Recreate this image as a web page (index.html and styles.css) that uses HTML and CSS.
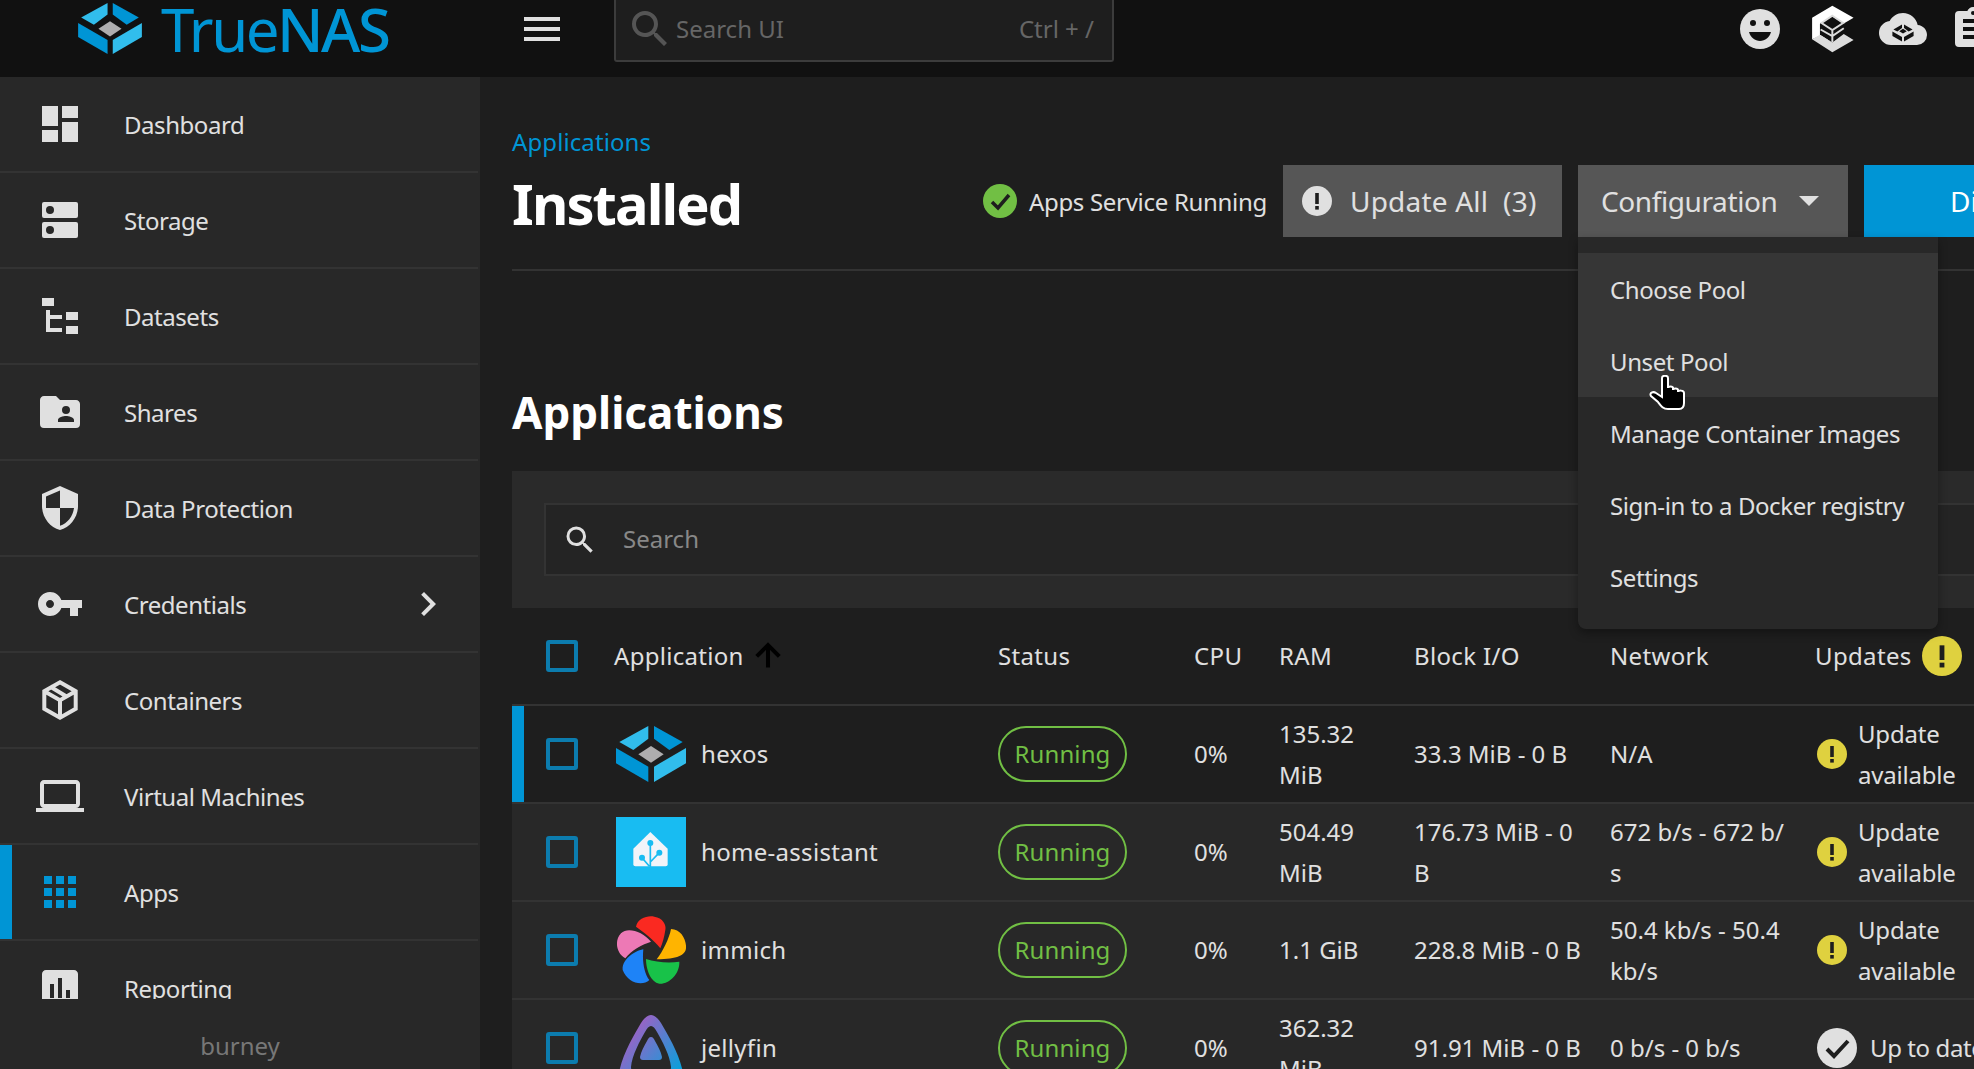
FILE: index.html
```html
<!DOCTYPE html>
<html lang="en">
<head>
<meta charset="utf-8">
<title>TrueNAS - Installed</title>
<link rel="stylesheet" href="styles.css">
</head>
<body>
<svg class="defs" aria-hidden="true">
  <defs>
    <symbol id="hex" viewBox="30 30 210 168">
      <polygon fill="#31bdec" points="40,78 127,30 127,68 82,102"/>
      <polygon fill="#0095d5" points="144,30 230,78 190,102 144,68"/>
      <polygon fill="#0095d5" points="30,96 127,152 127,198 30,142"/>
      <polygon fill="#31bdec" points="144,152 240,96 240,142 144,198"/>
      <polygon fill="#aeadae" points="135,90 173,115 135,140 97,115"/>
    </symbol>
    <symbol id="warn" viewBox="0 0 30 30">
      <circle cx="15" cy="15" r="15" fill="currentColor"/>
      <rect x="13.2" y="7" width="3.6" height="11" fill="#1e1e1e"/>
      <rect x="13.2" y="20" width="3.6" height="3.6" fill="#1e1e1e"/>
    </symbol>
    <linearGradient id="jelly" x1="0.1" y1="0.2" x2="0.95" y2="0.9">
      <stop offset="0" stop-color="#aa5cc3"/>
      <stop offset="1" stop-color="#00a4dc"/>
    </linearGradient>
  </defs>
</svg>

<header class="topbar">
  <div class="brand">
    <svg class="brand-mark"><use href="#hex"/></svg>
    <span class="brand-name">True<b>NAS</b></span>
  </div>
  <svg class="icon48 burger" viewBox="0 0 24 24"><path d="M3 18h18v-2H3v2zm0-5h18v-2H3v2zm0-5h18V6H3v2z"/></svg>
  <div class="ui-search">
    <svg class="icon48 ui-search-icon" viewBox="0 0 24 24"><path d="M9.5,3A6.5,6.5 0 0,1 16,9.5C16,11.11 15.41,12.59 14.44,13.73L14.71,14H15.5L20.5,19L19,20.5L14,15.5V14.71L13.73,14.44C12.59,15.41 11.11,16 9.5,16A6.5,6.5 0 0,1 3,9.5A6.5,6.5 0 0,1 9.5,3M9.5,5C7,5 5,7 5,9.5C5,12 7,14 9.5,14C12,14 14,12 14,9.5C14,7 12,5 9.5,5Z"/></svg>
    <span class="ui-search-text">Search UI</span>
    <span class="ui-search-key">Ctrl + /</span>
  </div>
  <div class="top-actions">
    <svg class="icon48 smile" viewBox="0 0 48 48">
      <circle cx="24" cy="24" r="20" fill="#e0e0e0"/>
      <circle cx="17" cy="18" r="3" fill="#111"/>
      <circle cx="31" cy="18" r="3" fill="#111"/>
      <path d="M13 27h22c-1.5 5.500-6 9-11 9s-9.500-3.500-11-9z" fill="#111"/>
    </svg>
    <svg class="icon48" viewBox="34 13 136 147">
      <polygon fill="#fff" points="100,15 165,52 135,70 100,48 62,70 62,104 100,128 62,108 38,118 38,52"/>
      <polygon fill="#dcdcdc" points="38,118 62,104 100,128 135,102 165,120 100,158"/>
      <path fill="none" stroke="#dcdcdc" stroke-width="6" d="M100 46L133 68L100 90L67 68ZM100 90V128M64 88L100 108L135 84"/>
    </svg>
    <svg class="icon48" viewBox="0 0 24 24">
      <path d="M19.35,10.04C18.67,6.59 15.64,4 12,4C9.11,4 6.6,5.64 5.35,8.04C2.34,8.36 0,10.91 0,14A6,6 0 0,0 6,20H19A5,5 0 0,0 24,15C24,12.36 21.95,10.22 19.35,10.04Z"/>
      <path fill="#111" d="M7.2 12.200L11.500 9.700V11.500L9.200 13.200ZM12.500 9.700L16.800 12.200L14.800 13.200L12.500 11.500ZM6.700 13.200L11.500 16V18.300L6.700 15.500ZM12.500 16L17.300 13.200V15.500L12.500 18.300ZM12 11.900L13.900 13.100L12 14.300L10.100 13.100Z"/>
    </svg>
    <svg class="icon48" viewBox="0 0 24 24"><path d="M17,9H7V7H17M17,13H7V11H17M14,17H7V15H14M12,3A1,1 0 0,1 13,4A1,1 0 0,1 12,5A1,1 0 0,1 11,4A1,1 0 0,1 12,3M19,3H14.82C14.4,1.84 13.3,1 12,1C10.7,1 9.6,1.84 9.18,3H5A2,2 0 0,0 3,5V19A2,2 0 0,0 5,21H19A2,2 0 0,0 21,19V5C21,3.89 20.1,3 19,3Z"/></svg>
  </div>
</header>

<div class="shell">
  <aside class="sidebar">
    <nav class="nav">
      <a class="nav-row"><svg class="icon48" viewBox="0 0 24 24"><path d="M13,3V9H21V3M13,21H21V11H13M3,21H11V15H3M3,13H11V3H3V13Z"/></svg><span>Dashboard</span></a>
      <a class="nav-row"><svg class="icon48" viewBox="0 0 48 48"><rect x="6" y="6" width="36" height="16" rx="2"/><rect x="6" y="26" width="36" height="16" rx="2"/><circle class="hole" cx="14" cy="14" r="4"/><circle class="hole" cx="14" cy="34" r="4"/></svg><span>Storage</span></a>
      <a class="nav-row"><svg class="icon48" viewBox="0 0 48 48"><path d="M6 6H18V14H6ZM10 18H14V23H26V27H14V36H26V40H10ZM30 20H42V28H30ZM30 34H42V42H30Z"/></svg><span>Datasets</span></a>
      <a class="nav-row"><svg class="icon48" viewBox="0 0 24 24"><path d="M19,17H11V16C11,14.67 13.67,14 15,14C16.33,14 19,14.67 19,16M15,9A2,2 0 0,1 17,11A2,2 0 0,1 15,13A2,2 0 0,1 13,11A2,2 0 0,1 15,9M20,6H12L10,4H4C2.89,4 2,4.89 2,6V18A2,2 0 0,0 4,20H20A2,2 0 0,0 22,18V8C22,6.89 21.1,6 20,6Z"/></svg><span>Shares</span></a>
      <a class="nav-row"><svg class="icon48" viewBox="0 0 24 24"><path d="M12 1L3 5v6c0 5.550 3.840 10.740 9 12 5.160-1.260 9-6.450 9-12V5l-9-4zm0 10.990h7c-.53 4.120-3.280 7.790-7 8.940V12H5V6.300l7-3.110v8.800z"/></svg><span>Data Protection</span></a>
      <a class="nav-row"><svg class="icon48" viewBox="0 0 24 24"><path d="M12.650 10C11.830 7.670 9.610 6 7 6c-3.310 0-6 2.690-6 6s2.690 6 6 6c2.610 0 4.830-1.670 5.650-4H17v4h4v-4h2v-4H12.650zM7 14c-1.100 0-2-.9-2-2s.9-2 2-2 2 .9 2 2-.9 2-2 2z"/></svg><span>Credentials</span><svg class="icon48 chevron" viewBox="0 0 24 24"><path d="M8.59,16.58L13.17,12L8.59,7.41L10,6L16,12L10,18L8.59,16.58Z"/></svg></a>
      <a class="nav-row"><svg class="icon48 box" viewBox="0 0 48 48"><path d="M24 6.300L39.700 15.200V32.800L24 41.700L8.300 32.800V15.200ZM8.300 15.200L24 24.300L39.700 15.200M24 24.300V41.700M14 10.500L30.500 20.500"/></svg><span>Containers</span></a>
      <a class="nav-row"><svg class="icon48" viewBox="0 0 24 24"><path d="M20 18c1.100 0 1.990-.9 1.990-2L22 6c0-1.100-.9-2-2-2H4c-1.100 0-2 .9-2 2v10c0 1.100.9 2 2 2H0v2h24v-2h-4zM4 6h16v10H4V6z"/></svg><span>Virtual Machines</span></a>
      <a class="nav-row is-active"><svg class="icon48" viewBox="0 0 24 24"><path d="M4 4h4v4H4zM10 4h4v4h-4zM16 4h4v4h-4zM4 10h4v4H4zM10 10h4v4h-4zM16 10h4v4h-4zM4 16h4v4H4zM10 16h4v4h-4zM16 16h4v4h-4z"/></svg><span>Apps</span></a>
      <a class="nav-row"><svg class="icon48" viewBox="0 0 24 24"><path d="M19 3H5c-1.100 0-2 .9-2 2v14c0 1.100.9 2 2 2h14c1.100 0 2-.9 2-2V5c0-1.100-.9-2-2-2zM9 17H7v-7h2v7zm4 0h-2V7h2v10zm4 0h-2v-4h2v4z"/></svg><span>Reporting</span></a>
    </nav>
    <div class="host">burney</div>
  </aside>

  <main class="main">
    <section class="page-head">
      <a class="crumb">Applications</a>
      <div class="title-row">
        <h1 class="title">Installed</h1>
        <div class="status-note">
          <svg class="status-check" viewBox="0 0 34 34"><circle cx="17" cy="17" r="17" fill="#71bf44"/><path d="M9 18l6 6 11-13" fill="none" stroke="#1e1e1e" stroke-width="3.500"/></svg>
          <span>Apps Service Running</span>
        </div>
        <button class="btn btn-update"><svg class="btn-warn"><use href="#warn"/></svg><span>Update All&nbsp; (3)</span></button>
        <div class="menu-anchor">
          <button class="btn btn-config"><span>Configuration</span><i class="caret"></i></button>
          <ul class="menu">
            <li class="menu-item is-hover">Choose Pool</li>
            <li class="menu-item is-hover">Unset Pool
              <svg class="hand" viewBox="0 0 37 36"><path d="M13 3C13 0 19 0 19 3L19 13C19 11 24 11 24 13L24 15C24 13 29 13 29 15L29 17C29 15 35 15 35 18L35 28C35 32 33 34 30 34L19 34C14 34 12 31 9 27L2 21C0 18 4 16 7 18L13 22Z"/></svg>
            </li>
            <li class="menu-item">Manage Container Images</li>
            <li class="menu-item">Sign-in to a Docker registry</li>
            <li class="menu-item">Settings</li>
          </ul>
        </div>
        <button class="btn btn-primary">Discover Apps</button>
      </div>
    </section>

    <h2 class="section-title">Applications</h2>

    <section class="apps-card">
      <div class="filter-bar">
        <div class="filter">
          <svg class="filter-icon" viewBox="0 0 24 24"><path d="M9.5,3A6.5,6.5 0 0,1 16,9.5C16,11.11 15.41,12.59 14.44,13.73L14.71,14H15.5L20.5,19L19,20.5L14,15.5V14.71L13.73,14.44C12.59,15.41 11.11,16 9.5,16A6.5,6.5 0 0,1 3,9.5A6.5,6.5 0 0,1 9.5,3M9.5,5C7,5 5,7 5,9.5C5,12 7,14 9.5,14C12,14 14,12 14,9.5C14,7 12,5 9.5,5Z"/></svg>
          <span class="filter-text">Search</span>
        </div>
      </div>

      <div class="grid-row grid-head">
        <div class="cell-check"><i class="check"></i></div>
        <div class="cell-name one">Application<svg class="sort" viewBox="0 0 24 24"><path d="M4 12l1.410 1.410L11 7.830V20h2V7.830l5.580 5.590L20 12l-8-8-8 8z"/></svg></div>
        <div class="one">Status</div>
        <div class="one">CPU</div>
        <div class="one">RAM</div>
        <div class="one">Block I/O</div>
        <div class="one">Network</div>
        <div class="cell-updates"><span class="one">Updates</span><svg class="warn-large"><use href="#warn"/></svg></div>
      </div>

      <div class="grid-row is-selected">
        <div class="cell-check"><i class="check"></i></div>
        <div class="cell-name one"><svg class="app-logo hexos"><use href="#hex"/></svg>hexos</div>
        <div><span class="pill">Running</span></div>
        <div class="one">0%</div>
        <div>135.32<br>MiB</div>
        <div class="one">33.3 MiB - 0 B</div>
        <div class="one">N/A</div>
        <div class="cell-update"><svg class="warn-small"><use href="#warn"/></svg><span>Update<br>available</span></div>
      </div>

      <div class="grid-row">
        <div class="cell-check"><i class="check"></i></div>
        <div class="cell-name one">
          <svg class="app-logo" viewBox="30 30 210 210"><rect x="30" y="30" width="210" height="210" fill="#18bcf2"/><path fill="#f2f4f9" d="M133 75L185 125V172Q185 178 179 178H88Q82 178 82 172V125Z"/><path fill="none" stroke="#18bcf2" stroke-width="5" d="M133 108V180M160 137L133 165M108 152L130 178"/><circle cx="133" cy="108" r="9" fill="#18bcf2"/><circle cx="160" cy="137" r="9" fill="#18bcf2"/><circle cx="108" cy="152" r="9" fill="#18bcf2"/></svg>
          home-assistant
        </div>
        <div><span class="pill">Running</span></div>
        <div class="one">0%</div>
        <div>504.49<br>MiB</div>
        <div>176.73 MiB - 0<br>B</div>
        <div>672 b/s - 672 b/<br>s</div>
        <div class="cell-update"><svg class="warn-small"><use href="#warn"/></svg><span>Update<br>available</span></div>
      </div>

      <div class="grid-row">
        <div class="cell-check"><i class="check"></i></div>
        <div class="cell-name one">
          <svg class="app-logo" viewBox="30 30 210 210">
            <path fill="#fa2921" d="M90 65C95 40 125 30 145 35C170 38 182 60 178 75C175 95 170 115 163 130C145 105 110 80 90 65Z"/>
            <path fill="#ffb400" d="M195 72C225 72 242 105 240 130C238 150 215 163 152 163C170 140 190 100 195 72Z"/>
            <path fill="#18c249" d="M120 162C150 172 190 175 220 170C222 205 190 238 160 236C135 232 120 195 120 162Z"/>
            <path fill="#1e83f7" d="M112 133C108 170 115 205 130 225C110 245 65 235 50 195C48 165 80 140 112 133Z"/>
            <path fill="#ed79b5" d="M135 110C110 118 75 135 58 160C30 145 25 105 45 85C65 65 110 80 135 110Z"/>
          </svg>
          immich
        </div>
        <div><span class="pill">Running</span></div>
        <div class="one">0%</div>
        <div class="one">1.1 GiB</div>
        <div class="one">228.8 MiB - 0 B</div>
        <div>50.4 kb/s - 50.4<br>kb/s</div>
        <div class="cell-update"><svg class="warn-small"><use href="#warn"/></svg><span>Update<br>available</span></div>
      </div>

      <div class="grid-row">
        <div class="cell-check"><i class="check"></i></div>
        <div class="cell-name one">
          <svg class="app-logo" viewBox="0 0 70 70"><path fill="url(#jelly)" fill-rule="evenodd" d="M35 2C32 2 28 5 25 10C18 22 6 42 3 60C2 66 5 70 12 70L58 70C65 70 68 66 67 60C64 42 52 22 45 10C42 5 38 2 35 2ZM35 13C33 13 31 15 29 19C24 28 16 42 15 54C15 58 17 60 20 60L50 60C53 60 55 58 55 54C54 42 46 28 41 19C39 15 37 13 35 13ZM35 24C33 24 32 26 31 28C28 33 25 39 24 44C24 46 25 47 27 47L43 47C45 47 46 46 46 44C45 39 42 33 39 28C38 26 37 24 35 24Z"/></svg>
          jellyfin
        </div>
        <div><span class="pill">Running</span></div>
        <div class="one">0%</div>
        <div>362.32<br>MiB</div>
        <div class="one">91.91 MiB - 0 B</div>
        <div class="one">0 b/s - 0 b/s</div>
        <div class="cell-update"><svg class="ok-icon" viewBox="0 0 40 40"><circle cx="20" cy="20" r="20" fill="#e0e0e0"/><path d="M10 21l7 7 14-15" fill="none" stroke="#1e1e1e" stroke-width="4"/></svg><span class="one date">Up to date</span></div>
      </div>
    </section>
  </main>
</div>
</body>
</html>
```

FILE: styles.css
```css
* { box-sizing: border-box; }

html, body {
  margin: 0;
  height: 1069px;
  overflow: hidden;
}

body {
  background: #1e1e1e;
  color: #e0e0e0;
  font-family: "Noto Sans", "Liberation Sans", sans-serif;
  font-size: 24px;
}

.defs { position: absolute; width: 0; height: 0; }

.icon48 { width: 48px; height: 48px; flex: none; fill: #e0e0e0; }

/* top bar */
.topbar {
  display: flex;
  align-items: flex-start;
  height: 77px;
  background: #111;
}

.brand {
  display: flex;
  align-items: flex-start;
  width: 518px;
  flex: none;
  padding-left: 77px;
}

.brand-mark { width: 66px; height: 51px; flex: none; margin-top: 3px; }

.brand-name {
  margin-left: 18px;
  color: #0095d5;
  font-size: 60px;
  line-height: 58px;
  font-weight: 400;
  letter-spacing: -2.5px;
}

.brand-name b { font-weight: 500; }

.burger { margin-top: 5px; }

.ui-search {
  display: flex;
  flex: none;
  align-items: center;
  width: 500px;
  height: 62px;
  margin-left: 48px;
  padding: 0 18px 3px 10px;
  border: 2px solid #3c3c3c;
  border-top: 0;
  border-radius: 0 0 3px 3px;
  background: #1e1e1e;
  color: #666;
}

.ui-search-icon { fill: #555; }

.ui-search-text { margin-left: 2px; }

.ui-search-key { margin-left: auto; }

.top-actions {
  display: flex;
  flex: none;
  gap: 22px;
  margin-left: 622px;
  padding-top: 5px;
}

.smile { margin-right: 3px; }

/* shell */
.shell {
  display: flex;
  height: 992px;
}

.sidebar {
  display: flex;
  flex-direction: column;
  width: 480px;
  flex: none;
  background: #282828;
}

.nav {
  height: 922px;
  overflow: hidden;
  flex: none;
}

.nav-row {
  display: flex;
  align-items: center;
  height: 96px;
  flex: none;
  padding: 0 26px 0 36px;
  margin-right: 2px;
  border-bottom: 2px solid #333;
  color: #e0e0e0;
  letter-spacing: -0.45px;
}

.nav-row span { margin-left: 40px; }

.nav-row .box { fill: none; stroke: #e0e0e0; stroke-width: 4; }

.hole { fill: #282828; }

.chevron { margin-left: auto; }

.is-active { box-shadow: inset 12px 0 0 #0095d5; }

.is-active .icon48 { fill: #0095d5; }

.host {
  text-align: center;
  color: #777;
  padding-top: 29px;
  line-height: 36px;
}

/* main */
.main {
  flex: 1;
  min-width: 0;
  padding-left: 32px;
  overflow: hidden;
}

.page-head {
  height: 194px;
  padding-top: 49px;
  border-bottom: 2px solid #333;
}

.crumb {
  display: block;
  height: 32px;
  line-height: 32px;
  color: #0095d5;
  letter-spacing: 0.1px;
}

.title-row {
  display: flex;
  align-items: center;
  width: 1552px;
  height: 72px;
  margin-top: 7px;
}

.title {
  flex: 1;
  margin: 0;
  padding-top: 3px;
  color: #fff;
  font-size: 56px;
  font-weight: 700;
  line-height: 72px;
  letter-spacing: -1.9px;
}

.status-note {
  display: flex;
  align-items: center;
  gap: 12px;
  margin-right: 16px;
  white-space: nowrap;
  letter-spacing: -0.3px;
}

.status-check { width: 34px; height: 34px; }

.btn {
  display: flex;
  align-items: center;
  height: 72px;
  border: 0;
  font: inherit;
  font-size: 28px;
  color: #e0e0e0;
  background: #565656;
  white-space: nowrap;
}

.btn-update {
  width: 279px;
  padding-left: 19px;
  margin-right: 16px;
  letter-spacing: 0.2px;
}

.btn-warn { width: 30px; height: 30px; margin-right: 18px; color: #e0e0e0; }

.btn-config {
  width: 270px;
  padding-left: 23px;
  letter-spacing: -0.4px;
}

.caret {
  width: 0;
  height: 0;
  margin-left: 22px;
  border-left: 10px solid transparent;
  border-right: 10px solid transparent;
  border-top: 10px solid #e0e0e0;
}

.menu-anchor { position: relative; margin-right: 16px; }

.btn-primary {
  width: 200px;
  flex: none;
  padding-left: 86px;
  background: #0095d5;
  color: #fff;
}

.menu {
  position: absolute;
  top: 100%;
  left: 0;
  z-index: 5;
  width: 360px;
  margin: 0;
  padding: 16px 0;
  list-style: none;
  background: #282828;
  border-radius: 0 0 8px 8px;
  box-shadow: 0 4px 10px rgba(0, 0, 0, 0.35);
}

.menu-item {
  position: relative;
  height: 72px;
  line-height: 74px;
  padding-left: 32px;
  white-space: nowrap;
  letter-spacing: -0.4px;
}

.is-hover { background: #363636; }

.hand {
  position: absolute;
  left: 71px;
  top: 50px;
  width: 37px;
  height: 36px;
  fill: #000;
  stroke: #fff;
  stroke-width: 2;
}

.section-title {
  margin: 111px 0 29px;
  color: #fff;
  font-size: 44px;
  font-weight: 700;
  line-height: 60px;
}

/* apps card */
.apps-card { width: 1600px; }

.filter-bar {
  padding: 32px;
  height: 137px;
  background: #2a2a2a;
}

.filter {
  display: flex;
  align-items: center;
  height: 73px;
  padding-left: 16px;
  border: 2px solid #333;
  background: #242424;
  color: #888;
}

.filter-icon { width: 36px; height: 36px; fill: #e0e0e0; margin-right: 25px; }

.filter-text { padding-bottom: 2px; }

.grid-row {
  display: grid;
  grid-template-columns: 102px 384px 196px 85px 135px 196px 205px 297px;
  align-items: center;
  height: 98px;
  border-bottom: 2px solid #333;
  background: #282828;
  line-height: 41px;
}

.grid-head { background: #1e1e1e; letter-spacing: 0.35px; }

.is-selected {
  background: #1e1e1e;
  box-shadow: inset 12px 0 0 #0095d5;
}

.one { padding-bottom: 2px; }

.date { letter-spacing: -0.4px; }

.cell-check { padding-left: 34px; display: flex; }

.check {
  width: 32px;
  height: 32px;
  border: 4px solid #0c7cae;
  border-radius: 3px;
}

.cell-name { display: flex; align-items: center; letter-spacing: 0.3px; }

.sort {
  width: 36px;
  height: 36px;
  margin: 0 0 0 6px;
  fill: #000;
  stroke: #000;
  stroke-width: 0.7;
}

.app-logo { width: 70px; height: 70px; margin: 2px 15px 0 2px; flex: none; }

.hexos { height: 56px; }

.pill {
  display: inline-flex;
  align-items: center;
  justify-content: center;
  width: 129px;
  height: 56px;
  padding-bottom: 2px;
  border: 2px solid #71bf44;
  border-radius: 28px;
  color: #71bf44;
  vertical-align: middle;
  letter-spacing: 0.1px;
}

.cell-updates { display: flex; align-items: center; gap: 10px; }

.warn-large { width: 40px; height: 40px; color: #dfd13f; }

.cell-update { display: flex; align-items: center; padding-left: 2px; letter-spacing: -0.2px; }

.warn-small { width: 30px; height: 30px; margin-right: 11px; flex: none; color: #dfd13f; }

.ok-icon { width: 40px; height: 40px; margin-right: 13px; flex: none; }
```
